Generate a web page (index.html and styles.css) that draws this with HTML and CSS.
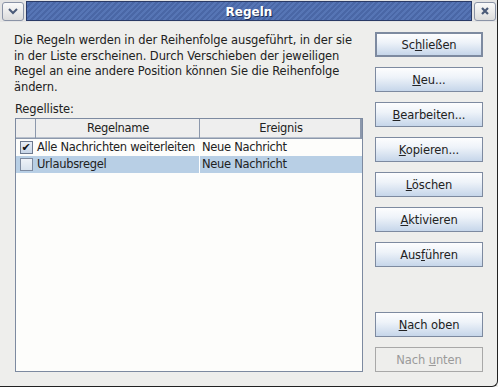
FILE: index.html
```html
<!DOCTYPE html>
<html lang="de">
<head>
  <meta charset="UTF-8">
  <title>Regeln</title>
  <link rel="stylesheet" href="styles.css">
</head>
<body>
  <div class="window">
    <div class="titlebar">
      <div class="tb-btn">
        <svg width="12" height="8" viewBox="0 0 12 8"><path d="M2 2 L6 6 L10 2" fill="none" stroke="#4a5a78" stroke-width="2"/></svg>
      </div>
      <div class="title">Regeln</div>
      <div class="tb-btn">
        <svg width="10" height="10" viewBox="0 0 10 10"><path d="M2 2 L8 8 M8 2 L2 8" fill="none" stroke="#4a5a78" stroke-width="2.2"/></svg>
      </div>
    </div>

    <div class="content">
      <div class="main">
        <p class="intro">Die Regeln werden in der Reihenfolge ausgeführt, in der sie in der Liste erscheinen. Durch Verschieben der jeweiligen Regel an eine andere Position können Sie die Reihenfolge ändern.</p>
        <div class="list-label">Regelliste:</div>
        <div class="rules">
          <div class="row head">
            <div class="cell check"></div>
            <div class="cell name">Regelname</div>
            <div class="cell event">Ereignis</div>
          </div>
          <div class="row">
            <div class="cell check"><span class="box checked">✔</span></div>
            <div class="cell name">Alle Nachrichten weiterleiten</div>
            <div class="cell event">Neue Nachricht</div>
          </div>
          <div class="row selected">
            <div class="cell check"><span class="box"></span></div>
            <div class="cell name">Urlaubsregel</div>
            <div class="cell event">Neue Nachricht</div>
          </div>
        </div>
      </div>

      <div class="actions">
        <button class="btn default">Sc<u>h</u>ließen</button>
        <button class="btn"><u>N</u>eu...</button>
        <button class="btn"><u>B</u>earbeiten...</button>
        <button class="btn"><u>K</u>opieren...</button>
        <button class="btn"><u>L</u>öschen</button>
        <button class="btn"><u>A</u>ktivieren</button>
        <button class="btn">Aus<u>f</u>ühren</button>
        <div class="spacer"></div>
        <button class="btn"><u>N</u>ach oben</button>
        <button class="btn" disabled>Nach <u>u</u>nten</button>
      </div>
    </div>
  </div>
</body>
</html>
```

FILE: styles.css
```css
body {
  margin: 0;
  font-family: "DejaVu Sans", sans-serif;
  font-size: 11.5px;
  letter-spacing: -0.1px;
  color: #222;
  background: #eeeeec;
}
.window {
  width: 498px;
  height: 387px;
  box-sizing: border-box;
  display: flex;
  flex-direction: column;
  background: #eeeeec;
  border-right: 1px solid #222;
  border-bottom: 1px solid #222;
  border-bottom-right-radius: 6px;
}
.titlebar {
  height: 22px;
  display: flex;
  align-items: center;
  gap: 2px;
  padding: 0 1px 0 2px;
  background: #e4e4e4;
}
.tb-btn {
  width: 20px;
  height: 17px;
  border: 1px solid #8a93a6;
  border-radius: 3px;
  background: linear-gradient(#fafafa, #dcdcdc);
  display: flex;
  align-items: center;
  justify-content: center;
}
.title {
  flex: 1;
  height: 20px;
  line-height: 20px;
  text-align: center;
  color: #fff;
  font-weight: bold;
  font-size: 12px;
  letter-spacing: 0;
  text-shadow: 1px 1px 0 #1e2e55;
  border: 1px solid #2a3a66;
  box-sizing: border-box;
  background:
    repeating-linear-gradient(-45deg, #5675b5 0 2px, #4a67a6 2px 4px);
}
.content {
  flex: 1;
  display: flex;
  padding: 10px 14px 14px 14px;
  gap: 12px;
}
.main {
  width: 349px;
  display: flex;
  flex-direction: column;
}
.intro {
  margin: 1px 0 0;
  max-width: 347px;
  line-height: 15.5px;
}
.list-label {
  margin-top: 7px;
  line-height: 15px;
  margin-left: 1px;
}
.rules {
  flex: 1;
  margin-top: 1px;
  margin-left: 1px;
  border: 1px solid #7d8aa0;
  background: #fdfdfb;
  letter-spacing: -0.3px;
}
.row {
  display: flex;
  height: 17px;
  line-height: 17px;
}
.row.head {
  height: 19px;
  line-height: 18px;
  background: #eeeeee;
  border-bottom: 1px solid #8c98ac;
  box-shadow: inset 0 -1px 0 #b8c0cc;
}
.cell {
  box-sizing: border-box;
  white-space: nowrap;
  overflow: hidden;
}
.cell.check {
  width: 20px;
  display: flex;
  align-items: center;
  justify-content: center;
}
.cell.name {
  width: 164px;
  padding-left: 1px;
  border-right: 1px solid #fff;
}
.cell.event {
  flex: 1;
  padding-left: 2px;
}
.head .cell {
  text-align: center;
  border-right: 1px solid #8c98ac;
}
.head .cell.check {
  display: block;
}
.head .cell.event {
  border-right: 2px solid #8c98ac;
}
.row.selected {
  background: #b8cfe5;
}
.box {
  width: 13px;
  height: 13px;
  box-sizing: border-box;
  border: 1px solid #6d7a90;
  background: linear-gradient(#e8eef6, #c8d6e8);
  font-size: 11px;
  line-height: 11px;
  letter-spacing: 0;
  text-align: center;
  color: #111;
}
.row.selected .box {
  border-color: #7d8aa0;
  background: linear-gradient(#eef2f8, #d8e2ee);
}
.actions {
  width: 108px;
  display: flex;
  flex-direction: column;
  gap: 10px;
}
.spacer {
  flex: 1;
}
.btn {
  height: 25px;
  font-family: "DejaVu Sans", sans-serif;
  font-size: 11.5px;
  letter-spacing: -0.1px;
  color: #222;
  border: 1px solid #7d8aa0;
  background: linear-gradient(#fdfdfe, #eef3f9 40%, #c6d6ea);
  padding: 0;
}
.btn.default {
  border: 2px solid #7d8aa0;
}
.btn:disabled {
  color: #9a9a9a;
  border-color: #a8a8a8;
  background: #eeeeec;
}
```
